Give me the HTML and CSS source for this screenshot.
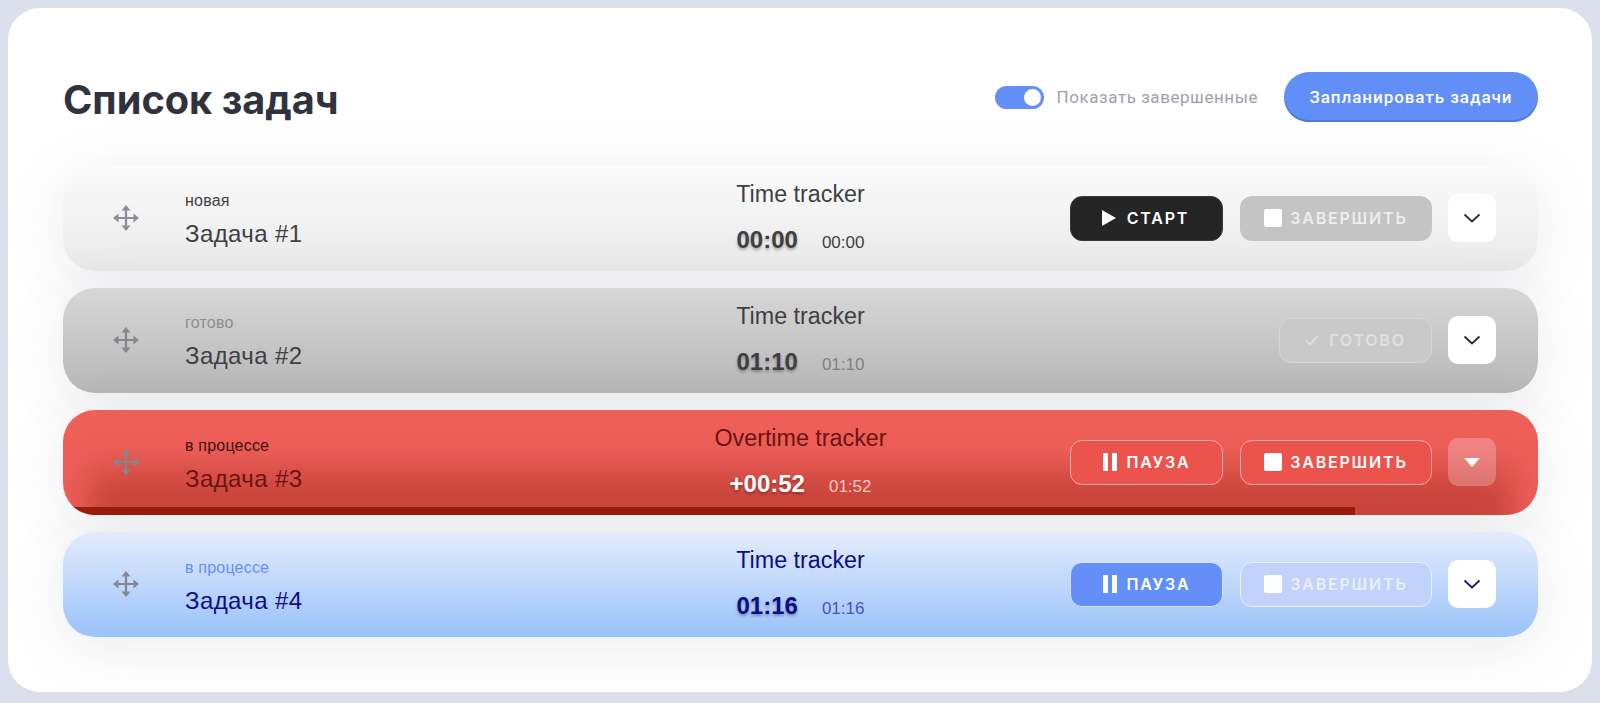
FILE: index.html
```html
<!DOCTYPE html>
<html lang="ru">
<head>
<meta charset="utf-8">
<title>Список задач</title>
<link rel="stylesheet" href="styles.css">
</head>
<body>
<svg class="defs" width="0" height="0" aria-hidden="true">
  <defs>
    <symbol id="move" viewBox="0 0 26 26">
      <path d="M13 3v20M3 13h20" fill="none" stroke="currentColor" stroke-width="2.200"/>
      <path d="M13 0l4.500 5.500h-9zM13 26l-4.500-5.500h9zM0 13l5.500-4.500v9zM26 13l-5.500 4.500v-9z" fill="currentColor"/>
    </symbol>
    <symbol id="chev" viewBox="0 0 18 12">
      <path d="M1.500 2.500l7.500 7L16.500 2.500" fill="none" stroke="currentColor" stroke-width="1.800"/>
    </symbol>
  </defs>
</svg>
<main class="card">
  <header class="head">
    <h1 class="title">Список задач</h1>
    <div class="head-right">
      <span class="toggle"><span class="knob"></span></span>
      <span class="toggle-label">Показать завершенные</span>
      <button class="plan">Запланировать задачи</button>
    </div>
  </header>
  <section class="list">
    <article class="row row-new">
      <div class="info">
        <svg class="move"><use href="#move"/></svg>
        <div class="names"><div class="status">новая</div><div class="name">Задача #1</div></div>
      </div>
      <div class="tracker">
        <div class="t-label">Time tracker</div>
        <div class="t-times"><span class="t-main">00:00</span><span class="t-sub">00:00</span></div>
      </div>
      <div class="actions">
        <button class="btn btn-start"><span class="i-play"></span>СТАРТ</button>
        <button class="btn btn-finish btn-off"><span class="i-stop"></span>ЗАВЕРШИТЬ</button>
        <button class="more"><svg class="chev"><use href="#chev"/></svg></button>
      </div>
    </article>
    <article class="row row-done">
      <div class="info">
        <svg class="move"><use href="#move"/></svg>
        <div class="names"><div class="status">готово</div><div class="name">Задача #2</div></div>
      </div>
      <div class="tracker">
        <div class="t-label">Time tracker</div>
        <div class="t-times"><span class="t-main">01:10</span><span class="t-sub">01:10</span></div>
      </div>
      <div class="actions">
        <button class="btn btn-ready"><svg class="i-check" viewBox="0 0 14 12"><path d="M1 6.500l4 4L13 1.500" fill="none" stroke="currentColor" stroke-width="1.600"/></svg>ГОТОВО</button>
        <button class="more"><svg class="chev"><use href="#chev"/></svg></button>
      </div>
    </article>
    <article class="row row-over">
      <div class="info">
        <svg class="move"><use href="#move"/></svg>
        <div class="names"><div class="status">в процессе</div><div class="name">Задача #3</div></div>
      </div>
      <div class="tracker">
        <div class="t-label">Overtime tracker</div>
        <div class="t-times"><span class="t-main">+00:52</span><span class="t-sub">01:52</span></div>
      </div>
      <div class="actions">
        <button class="btn btn-red btn-pause"><span class="i-pause"></span>ПАУЗА</button>
        <button class="btn btn-red btn-finish"><span class="i-stop"></span>ЗАВЕРШИТЬ</button>
        <button class="more more-open"><span class="i-tri"></span></button>
      </div>
      <div class="progress"></div>
    </article>
    <article class="row row-active">
      <div class="info">
        <svg class="move"><use href="#move"/></svg>
        <div class="names"><div class="status">в процессе</div><div class="name">Задача #4</div></div>
      </div>
      <div class="tracker">
        <div class="t-label">Time tracker</div>
        <div class="t-times"><span class="t-main">01:16</span><span class="t-sub">01:16</span></div>
      </div>
      <div class="actions">
        <button class="btn btn-blue btn-pause"><span class="i-pause"></span>ПАУЗА</button>
        <button class="btn btn-ghost btn-finish"><span class="i-stop"></span>ЗАВЕРШИТЬ</button>
        <button class="more"><svg class="chev"><use href="#chev"/></svg></button>
      </div>
    </article>
  </section>
</main>
</body>
</html>
```
FILE: styles.css
```css
* { box-sizing: border-box; }
html, body { height: 100%; }
body {
  margin: 0;
  padding: 8px;
  overflow: hidden;
  background: #dbdfeb;
  font-family: "Liberation Sans", Arial, sans-serif;
}
.defs { position: absolute; }
.card {
  height: 684px;
  padding: 64px 54px 0 55px;
  background: #fff;
  border-radius: 32px;
  overflow: hidden;
}
.head {
  display: flex;
  align-items: center;
  justify-content: space-between;
  height: 50px;
  margin-bottom: 44px;
}
.title {
  margin: 6px 0 0;
  font: 700 39.700px Inter, sans-serif;
  color: #30333d;
}
.head-right { display: flex; align-items: center; }
.toggle {
  display: flex;
  justify-content: flex-end;
  align-items: center;
  width: 49px;
  height: 23px;
  padding: 0 3px;
  border-radius: 12px;
  background: #648ff8;
}
.knob { width: 17px; height: 17px; border-radius: 50%; background: #fff; }
.toggle-label {
  margin: 0 26px 0 13px;
  font: 400 17px Roboto, sans-serif;
  letter-spacing: .55px;
  color: #a0a0ac;
}
.plan {
  width: 254px;
  height: 50px;
  border: 0;
  border-radius: 25px;
  background: #628ef8;
  box-shadow: inset 0 -2px 0 #4f78dc;
  color: #fff;
  font: 500 17px Roboto, sans-serif;
  letter-spacing: .95px;
}
.list { display: flex; flex-direction: column; gap: 17px; }
.row {
  position: relative;
  display: grid;
  grid-template-columns: 1fr auto 1fr;
  align-items: center;
  height: 105px;
  padding: 0 42px;
  border-radius: 32px;
  overflow: hidden;
  color: #3f3f42;
  box-shadow: 0 10px 60px rgba(50, 60, 90, .1);
}
.row-new { background: linear-gradient(#fbfbfb, #e9e9ea); }
.row-done { background: linear-gradient(#d7d7d7, #b7b7b7); }
.row-over { background: #ee5f5a; color: #6b1310; }
.row-over::before {
  content: "";
  position: absolute;
  left: 25px;
  right: 25px;
  bottom: -30px;
  height: 76px;
  background: #cb463d;
  filter: blur(16px);
}
.row-active { background: linear-gradient(#e4ecfd, #9ac2f9); color: #0d0d85; }
.info, .tracker, .actions { position: relative; }
.info { display: flex; align-items: center; gap: 46px; padding-left: 8px; }
.move { width: 26px; height: 26px; margin-top: -2px; color: #8b8d99; flex: none; }
.row-done .move, .row-over .move, .row-active .move { color: #85878f; }
.names { margin-top: 3px; }
.row-over .names, .row-active .names { margin-top: 5px; }
.status { font-size: 16px; line-height: 18px; margin-bottom: 10px; letter-spacing: .2px; }
.row-done .status { color: #8d8d8f; }
.row-over .status { color: #401010; }
.row-active .status { color: #648ff8; }
.name { font-size: 24px; line-height: 28px; letter-spacing: .4px; }
.tracker { text-align: center; padding-bottom: 4px; }
.t-label { font-size: 23.300px; line-height: 28px; margin-bottom: 18px; }
.t-times { display: flex; justify-content: center; align-items: baseline; gap: 24px; }
.t-main { font-size: 24px; line-height: 28px; font-weight: 700; text-shadow: 0 2px 3px rgba(0, 0, 0, .3); }
.t-sub { font-size: 17px; }
.row-done .t-sub { color: #808082; }
.row-over .t-main { color: #fff; }
.row-over .t-sub { color: #f5c9c6; }
.row-active .t-sub { color: #4a52b8; }
.actions { display: flex; align-items: center; justify-content: flex-end; gap: 16px; padding-bottom: 1px; }
.btn {
  display: flex;
  align-items: center;
  justify-content: center;
  gap: 8px;
  height: 45px;
  border: 1px solid transparent;
  border-radius: 12px;
  color: #fff;
  font: 600 16px Inter, sans-serif;
  letter-spacing: 1.800px;
}
.btn-start { width: 153px; padding-left: 4px; background: #252525; border-color: #3a3a3a; gap: 11px; }
.btn-pause { width: 153px; gap: 10px; }
.btn-finish { width: 192px; margin-left: 1px; }
.btn-off { background: #c4c4c4; color: #eee; border: 0; }
.btn-ready {
  width: 153px;
  gap: 10px;
  background: #c9c9c9;
  border-color: #d6d6d6;
  color: #e0e0e0;
}
.btn-red { background: #ed534d; border-color: #f5aaa6; }
.btn-blue { background: #648ff8; border-color: #d5e2fd; }
.btn-ghost { background: #c2d2fa; border-color: #e8effd; color: #e9effe; }
.more {
  display: flex;
  align-items: center;
  justify-content: center;
  width: 48px;
  height: 48px;
  border: 0;
  border-radius: 10px;
  background: #fff;
  color: #2c2c30;
}
.row-active .more { color: #14147f; }
.more-open { background: rgba(255, 255, 255, .24); }
.chev { width: 18px; height: 12px; }
.i-play {
  width: 0;
  height: 0;
  border-left: 14px solid #fff;
  border-top: 8.500px solid transparent;
  border-bottom: 8.500px solid transparent;
}
.i-stop { width: 18px; height: 18px; border-radius: 2px; background: #fff; }
.i-pause {
  width: 14px;
  height: 18px;
  border-left: 5px solid #fff;
  border-right: 5px solid #fff;
  border-radius: 1px;
}
.i-check { width: 14px; height: 12px; }
.i-tri {
  width: 0;
  height: 0;
  border-top: 9px solid #fff;
  border-left: 8.500px solid transparent;
  border-right: 8.500px solid transparent;
}
.progress {
  position: absolute;
  left: 0;
  bottom: 0;
  width: 1292px;
  height: 8px;
  background: #9c1b10;
}
```
